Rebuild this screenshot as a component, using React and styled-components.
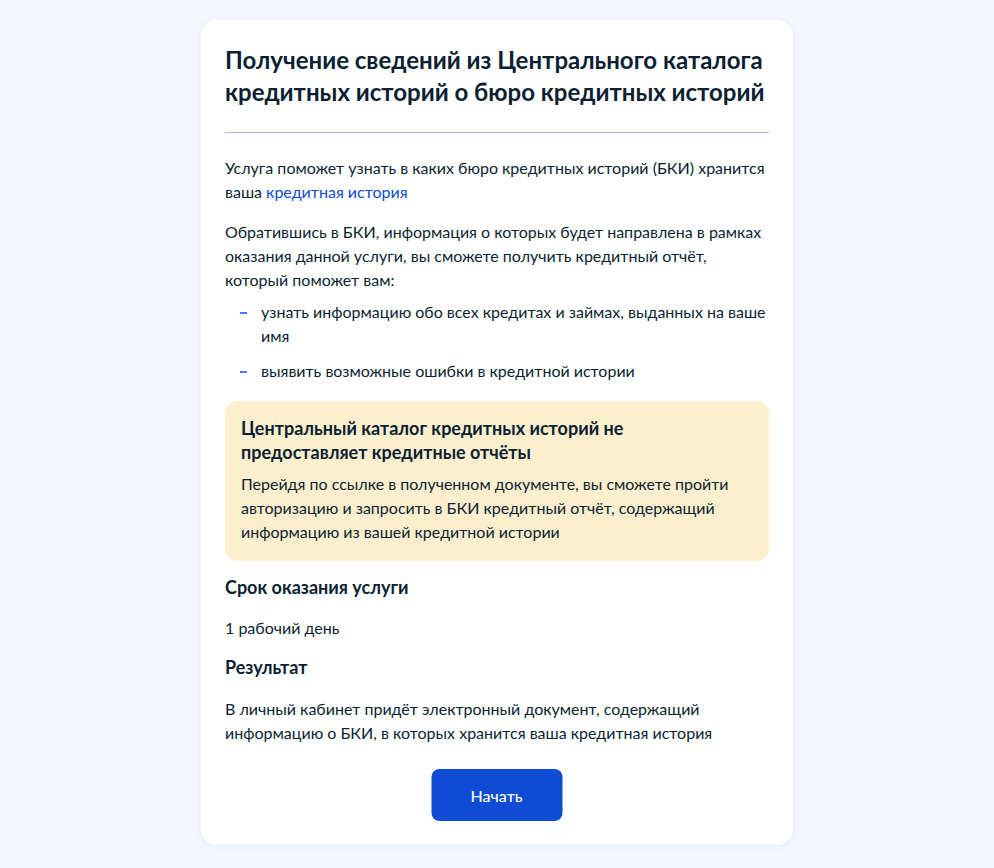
import React from "react";
import styled, { createGlobalStyle } from "styled-components";

const Global = createGlobalStyle`
  html, body { margin: 0; padding: 0; }
  body {
    background: #f5f7fc;
    font-family: Lato, "Noto Sans", sans-serif;
    color: #0b1f33;
    -webkit-font-smoothing: antialiased;
  }
`;

const Page = styled.div`
  min-height: 868px;
  padding: 20px 0 23px;
  box-sizing: border-box;
  display: flex;
  justify-content: center;
  align-items: flex-start;
`;

const Card = styled.main`
  width: 592px;
  box-sizing: border-box;
  background: #fff;
  border-radius: 16px;
  box-shadow: 0 1px 6px rgba(28, 74, 170, 0.08);
  padding: 24px 24px 24px;
  display: flex;
  flex-direction: column;
`;

const Title = styled.h1`
  margin: 0;
  font-size: 24px;
  line-height: 32px;
  font-weight: 700;
`;

const Divider = styled.hr`
  margin: 24px 0 23px;
  border: 0;
  height: 1px;
  background: #9db8ee;
`;

const Text = styled.p`
  margin: ${(p) => p.$mt || 0}px 0 0;
  font-size: 16px;
  line-height: 24px;
`;

const Link = styled.a`
  color: #0d4cd3;
  text-decoration: none;
`;

const List = styled.ul`
  list-style: none;
  margin: 8px 0 0;
  padding: 0 0 0 36px;
  display: flex;
  flex-direction: column;
  gap: 11px;
`;

const Item = styled.li`
  position: relative;
  font-size: 16px;
  line-height: 24px;
  &::before {
    content: "";
    position: absolute;
    left: -21px;
    top: 12px;
    width: 7px;
    height: 2px;
    background: #3d7cf0;
  }
`;

const Notice = styled.section`
  margin-top: 18px;
  background: #fdefcd;
  border-radius: 12px;
  padding: 15px 16px 17px;
`;

const NoticeTitle = styled.h3`
  margin: 0;
  font-size: 18px;
  line-height: 24px;
  font-weight: 700;
`;

const Heading = styled.h2`
  margin: ${(p) => p.$mt || 0}px 0 0;
  font-size: 18px;
  line-height: 24px;
  font-weight: 700;
`;

const ButtonRow = styled.div`
  display: flex;
  justify-content: center;
  margin-top: 24px;
`;

const Button = styled.button`
  width: 131px;
  height: 52px;
  border: 0;
  border-radius: 8px;
  background: #0d4cd3;
  color: #fff;
  font-family: Lato, "Noto Sans", sans-serif;
  font-size: 16px;
  font-weight: 500;
  cursor: pointer;
  transform: translateX(-0.5px);
`;

export default function App() {
  return (
    <>
      <Global />
      <Page>
        <Card>
          <Title>
            Получение сведений из Центрального каталога кредитных историй о бюро
            кредитных историй
          </Title>
          <Divider />
          <Text>
            Услуга поможет узнать в каких бюро кредитных историй (БКИ) хранится
            ваша <Link href="#">кредитная история</Link>
          </Text>
          <Text $mt={16}>
            Обратившись в БКИ, информация о которых будет направлена в рамках
            оказания данной услуги, вы сможете получить кредитный отчёт,
            который поможет вам:
          </Text>
          <List>
            <Item>
              узнать информацию обо всех кредитах и займах, выданных на ваше
              имя
            </Item>
            <Item>выявить возможные ошибки в кредитной истории</Item>
          </List>
          <Notice>
            <NoticeTitle>
              Центральный каталог кредитных историй не предоставляет кредитные
              отчёты
            </NoticeTitle>
            <Text $mt={8}>
              Перейдя по ссылке в полученном документе, вы сможете пройти
              авторизацию и запросить в БКИ кредитный отчёт, содержащий
              информацию из вашей кредитной истории
            </Text>
          </Notice>
          <Heading $mt={14}>Срок оказания услуги</Heading>
          <Text $mt={17}>1 рабочий день</Text>
          <Heading $mt={15}>Результат</Heading>
          <Text $mt={18}>
            В личный кабинет придёт электронный документ, содержащий
            информацию о БКИ, в которых хранится ваша кредитная история
          </Text>
          <ButtonRow>
            <Button>Начать</Button>
          </ButtonRow>
        </Card>
      </Page>
    </>
  );
}
